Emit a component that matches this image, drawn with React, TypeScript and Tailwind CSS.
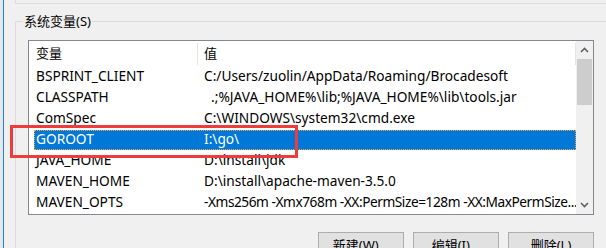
import React from "react";

interface EnvRow {
  name: string;
  value: string;
  selected?: boolean;
  tight?: boolean;
}

const rows: EnvRow[] = [
  { name: "BSPRINT_CLIENT", value: "C:/Users/zuolin/AppData/Roaming/Brocadesoft" },
  { name: "CLASSPATH", value: "  .;%JAVA_HOME%\\lib;%JAVA_HOME%\\lib\\tools.jar" },
  { name: "ComSpec", value: "C:\\WINDOWS\\system32\\cmd.exe" },
  { name: "GOROOT", value: "I:\\go\\", selected: true },
  { name: "JAVA_HOME", value: "D:\\install\\jdk" },
  { name: "MAVEN_HOME", value: "D:\\install\\apache-maven-3.5.0" },
  { name: "MAVEN_OPTS", value: "-Xms256m -Xmx768m -XX:PermSize=128m -XX:MaxPermSize...", tight: true },
];

const Chevron = ({ up }: { up?: boolean }) => (
  <svg width="9" height="6" viewBox="0 0 9 6" className={up ? "" : "rotate-180"}>
    <path d="M1 5 L4.5 1.5 L8 5" fill="none" stroke="#606060" strokeWidth="1.6" />
  </svg>
);

export default function App() {
  return (
    <div className="relative w-[606px] h-[248px] overflow-hidden bg-[#f0f0f0] flex font-['Noto_Sans','Noto_Sans_CJK_SC',sans-serif] text-black">
      {/* window edge behind */}
      <div className="w-[4px] h-full bg-[#e6e6e6] border-r border-[#1a86e0] shrink-0" />

      <div className="flex-1 min-w-0 flex flex-col pl-[11px]">
        {/* bottom of the user variables group */}
        <div className="h-[4px] w-[700px] border-l border-b border-[#dcdcdc] shrink-0" />

        {/* system variables group */}
        <div className="mt-[17px] w-[700px] border-l border-t border-[#dcdcdc] flex flex-col">
          <div className="-mt-[9px] ml-[7px] w-fit px-[1px] bg-[#f0f0f0] text-[13px] leading-[16px]">系统变量(S)</div>

          <div className="pl-[12px]">
            {/* list view */}
            <div className="mt-[11px] w-[566px] h-[175px] border border-[#828790] bg-white flex">
              <div className="flex-1 min-w-0 flex flex-col">
                <div className="h-[25px] flex items-stretch text-[13px] pt-[1px]">
                  <div className="w-[168px] pl-[7px] flex items-center">变量</div>
                  <div className="w-px my-[1px] bg-[#e5e5e5]" />
                  <div className="flex-1 pl-[6px] flex items-center">值</div>
                  <div className="w-px my-[1px] bg-[#e5e5e5]" />
                </div>
                {rows.map((r) => (
                  <div key={r.name} className="h-[21px] ml-[5px] flex items-center text-[13.7px] whitespace-pre">
                    <div
                      className={
                        r.selected
                          ? "flex-1 min-w-0 h-[20px] flex items-center bg-[#0078d7] text-white outline-1 outline-dotted outline-[#f5a34a] -outline-offset-1"
                          : "flex-1 min-w-0 h-[20px] flex items-center"
                      }
                    >
                      <div className="w-[168px] shrink-0 pl-[2px] overflow-hidden">{r.name}</div>
                      <div className={r.tight ? "flex-1 min-w-0 pl-[2px] overflow-hidden tracking-[-0.45px]" : "flex-1 min-w-0 pl-[2px] overflow-hidden"}>
                        {r.value}
                      </div>
                    </div>
                  </div>
                ))}
              </div>

              {/* scrollbar */}
              <div className="w-[17px] shrink-0 bg-[#f0f0f0] flex flex-col items-center">
                <div className="h-[18px] flex items-center justify-center">
                  <Chevron up />
                </div>
                <div className="w-[15px] h-[46px] bg-[#cdcdcd]" />
                <div className="flex-1" />
                <div className="h-[18px] flex items-center justify-center">
                  <Chevron />
                </div>
              </div>
            </div>

            {/* buttons */}
            <div className="mt-[17px] w-[566px] flex justify-end gap-[9px] text-[13px]">
              <button className="w-[86px] h-[28px] bg-[#e1e1e1] border border-[#adadad]">新建(W)...</button>
              <button className="w-[86px] h-[28px] bg-[#e1e1e1] border border-[#adadad]">编辑(I)...</button>
              <button className="w-[86px] h-[28px] bg-[#e1e1e1] border border-[#adadad]">删除(L)</button>
            </div>
          </div>
        </div>
      </div>

      {/* red annotation box */}
      <div className="absolute left-[10px] top-[125px] w-[288px] h-[33px] border-[3px] border-[#ee3b3b]" />
    </div>
  );
}
